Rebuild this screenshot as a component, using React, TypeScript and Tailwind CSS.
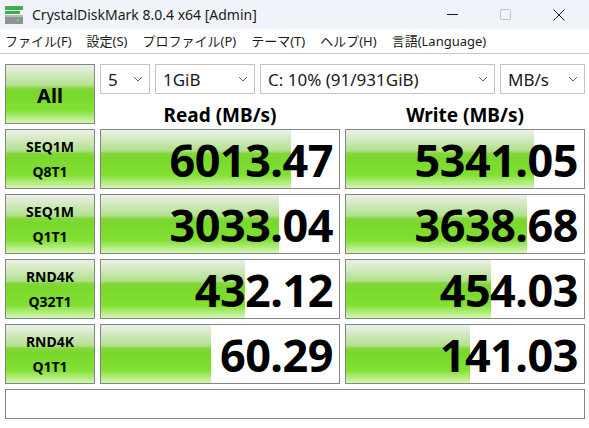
import React from "react";

const font = { fontFamily: '"Noto Sans", "Noto Sans CJK JP", sans-serif' };

const rows = [
  { a: "SEQ1M", b: "Q8T1", read: "6013.47", rw: 190, write: "5341.05", ww: 188 },
  { a: "SEQ1M", b: "Q1T1", read: "3033.04", rw: 178, write: "3638.68", ww: 181 },
  { a: "RND4K", b: "Q32T1", read: "432.12", rw: 144, write: "454.03", ww: 145 },
  { a: "RND4K", b: "Q1T1", read: "60.29", rw: 110, write: "141.03", ww: 124 },
];

const green =
  "bg-[linear-gradient(to_bottom,#ecf0e9_0%,#cbe8b6_20%,#b2e08c_36%,#86d73d_40%,#78d82c_48%,#82e032_78%,#a8ea6e_88%,#d4f6b4_100%)]";

function Combo({ w, text }: { w: string; text: string }) {
  return (
    <div className={`${w} h-[30px] border border-[#c4c4c4] bg-white flex items-center justify-between pl-[7px] pr-[6px]`}>
      <span className="text-[17px] text-[#1a1a1a] leading-none whitespace-nowrap">{text}</span>
      <svg width="10" height="6" viewBox="0 0 10 6" className="shrink-0">
        <path d="M1 1l4 4 4-4" fill="none" stroke="#606060" strokeWidth="1" />
      </svg>
    </div>
  );
}

function Cell({ value, width }: { value: string; width: number }) {
  return (
    <div className="relative h-[60px] border border-[#858585] bg-white overflow-hidden flex items-center justify-end pr-[6px]">
      <div className={`absolute left-0 top-0 bottom-0 ${green}`} style={{ width }} />
      <span className="relative font-bold text-[45px] leading-none text-black tracking-[-0.5px]">{value}</span>
    </div>
  );
}

export default function App() {
  return (
    <div className="w-[589px] h-[428px] bg-white overflow-hidden select-none" style={font}>
      {/* title bar */}
      <div className="h-[29px] bg-[#f0f3f9] flex items-center">
        <svg width="20" height="20" viewBox="0 0 20 20" className="ml-[4px]">
          <rect x="1" y="1" width="18" height="4" fill="#3cb04a" />
          <rect x="1" y="6" width="15" height="3" fill="#3cb04a" />
          <rect x="1" y="10" width="18" height="9" fill="#8d9398" />
          <rect x="1" y="10" width="18" height="2" fill="#b5babd" />
          <circle cx="14" cy="15" r="1.6" fill="#5fe04a" />
        </svg>
        <span className="ml-[8px] text-[14px] text-[#1a1a1a]">CrystalDiskMark 8.0.4 x64 [Admin]</span>
        <div className="ml-auto flex items-center">
          <div className="w-[46px] flex justify-center">
            <div className="w-[11px] h-px bg-[#1a1a1a]" />
          </div>
          <div className="w-[60px] flex justify-center">
            <div className="w-[11px] h-[11px] border border-[#c4c4c4] rounded-[2px]" />
          </div>
          <div className="w-[48px] flex justify-center mr-[6px]">
            <svg width="12" height="12" viewBox="0 0 12 12">
              <path d="M0.5 0.5l11 11M11.5 0.5l-11 11" stroke="#1a1a1a" strokeWidth="1" />
            </svg>
          </div>
        </div>
      </div>

      {/* menu bar */}
      <div className="h-[25px] flex items-center gap-[15px] pl-[5px] pt-[2px] text-[13px] text-[#1a1a1a] border-b border-[#c8c8c8]">
        <span>ファイル(F)</span>
        <span>設定(S)</span>
        <span>プロファイル(P)</span>
        <span>テーマ(T)</span>
        <span>ヘルプ(H)</span>
        <span>言語(Language)</span>
      </div>

      {/* body */}
      <div className="pt-[10px] pl-[5px] grid grid-cols-[90px_240px_240px] gap-[5px]">
        <div className={`h-[60px] border border-[#858585] ${green} flex items-center justify-center pt-[4px]`}>
          <span className="font-bold text-[20px] text-black">All</span>
        </div>
        <div className="col-span-2 flex flex-col">
          <div className="flex gap-[5px]">
            <Combo w="w-[50px]" text="5" />
            <Combo w="w-[100px]" text="1GiB" />
            <Combo w="w-[235px]" text="C: 10% (91/931GiB)" />
            <Combo w="w-[85px]" text="MB/s" />
          </div>
          <div className="grid grid-cols-2 gap-[5px] flex-1 items-end">
            <div className="text-center font-bold text-[19px] leading-[18px] text-black">Read (MB/s)</div>
            <div className="text-center font-bold text-[19px] leading-[18px] text-black">Write (MB/s)</div>
          </div>
        </div>

        {rows.map((r, i) => (
          <React.Fragment key={i}>
            <div className={`h-[60px] border border-[#858585] ${green} flex flex-col items-center justify-center leading-[25px]`}>
              <span className="font-bold text-[14px] text-black">{r.a}</span>
              <span className="font-bold text-[14px] text-black">{r.b}</span>
            </div>
            <Cell value={r.read} width={r.rw} />
            <Cell value={r.write} width={r.ww} />
          </React.Fragment>
        ))}

        <div className="col-span-3 h-[30px] border border-[#858585] bg-white" />
      </div>
    </div>
  );
}
